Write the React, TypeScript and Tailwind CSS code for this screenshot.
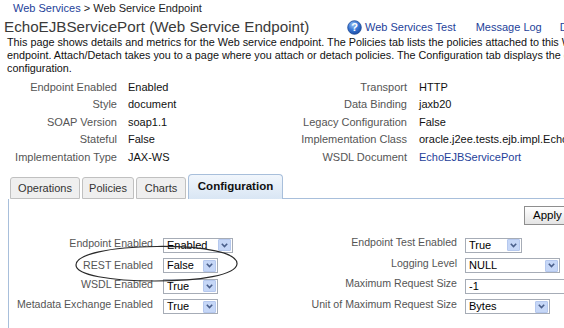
import React from "react";

const HelpIcon = () => (
  <svg width="15" height="15" viewBox="0 0 15 15" className="shrink-0">
    <defs>
      <radialGradient id="hg" cx="40%" cy="30%" r="70%">
        <stop offset="0%" stopColor="#9cc4f4" />
        <stop offset="55%" stopColor="#3b78d6" />
        <stop offset="100%" stopColor="#1c4fa8" />
      </radialGradient>
    </defs>
    <circle cx="7.5" cy="7.5" r="6.8" fill="url(#hg)" stroke="#1a4796" strokeWidth="0.8" />
    <text x="7.5" y="11.3" textAnchor="middle" fontSize="11" fontWeight="bold" fill="#ffffff" fontFamily="Liberation Sans, Arial, sans-serif">
      ?
    </text>
  </svg>
);

const Select = ({ value, width }: { value: string; width: number }) => (
  <div
    className="h-[15px] border border-[#a6acb6] bg-white flex items-center justify-between pl-[3px] pr-px text-[11px] text-black leading-none shrink-0"
    style={{ width }}
  >
    <span>{value}</span>
    <span className="w-[13px] h-[12px] bg-[#c6d7f7] border border-[#b5c8ee] rounded-[1px] flex items-center justify-center">
      <svg width="7" height="5" viewBox="0 0 7 5">
        <path d="M0.8 0.8 L3.5 3.6 L6.2 0.8" fill="none" stroke="#4a5f8a" strokeWidth="1.6" />
      </svg>
    </span>
  </div>
);

const props = [
  ["Endpoint Enabled", "Enabled", "Transport", "HTTP"],
  ["Style", "document", "Data Binding", "jaxb20"],
  ["SOAP Version", "soap1.1", "Legacy Configuration", "False"],
  ["Stateful", "False", "Implementation Class", "oracle.j2ee.tests.ejb.impl.EchoEJBServicePortImpl"],
  ["Implementation Type", "JAX-WS", "WSDL Document", "EchoEJBServicePort"],
];

export default function App() {
  return (
    <div className="relative w-[564px] h-[328px] overflow-hidden bg-white font-['Liberation_Sans',Arial,sans-serif] text-[11px] text-[#222]">
      {/* Breadcrumb */}
      <div className="h-[18px] pt-[2px] pl-[13px] leading-[13px] whitespace-nowrap">
        <span className="text-[#1e3f9a]">Web Services</span>
        <span className="text-[#222]"> &gt; Web Service Endpoint</span>
      </div>

      {/* Title row */}
      <div className="h-[18px] flex items-center whitespace-nowrap">
        <div className="w-[347px] shrink-0 pl-[4px] text-[15.2px] text-[#3a3a3a] leading-[18px]">
          EchoEJBServicePort (Web Service Endpoint)
        </div>
        <HelpIcon />
        <span className="ml-[3px] shrink-0 text-[#1e3f9a]">Web Services Test</span>
        <span className="ml-[20px] shrink-0 text-[#1e3f9a]">Message Log</span>
        <span className="ml-[18px] shrink-0 text-[#1e3f9a]">Diagnostic Logs</span>
      </div>

      {/* Description */}
      <div className="pl-[7px] leading-[13px] whitespace-nowrap text-[10.8px] text-[#111]">
        <div>This page shows details and metrics for the Web service endpoint. The Policies tab lists the policies attached to this Web service</div>
        <div>endpoint. Attach/Detach takes you to a page where you attach or detach policies. The Configuration tab displays the endpoint</div>
        <div>configuration.</div>
      </div>

      {/* Properties */}
      <div className="mt-[3px] flex whitespace-nowrap">
        <div className="w-[290px] shrink-0 grid grid-cols-[117px_1fr] auto-rows-[17.5px] items-center">
          {props.map((p) => (
            <React.Fragment key={p[0]}>
              <div className="text-right text-[#555]">{p[0]}</div>
              <div className="pl-[11px] text-[#111]">{p[1]}</div>
            </React.Fragment>
          ))}
        </div>
        <div className="shrink-0 grid grid-cols-[117px_1fr] auto-rows-[17.5px] items-center">
          {props.map((p) => (
            <React.Fragment key={p[2]}>
              <div className="text-right text-[#555]">{p[2]}</div>
              <div className={"pl-[12px] " + (p[2] === "WSDL Document" ? "text-[#1e3f9a]" : "text-[#111]")}>{p[3]}</div>
            </React.Fragment>
          ))}
        </div>
      </div>

      {/* Tabs */}
      <div className="mt-[8.5px] flex items-end h-[25px] pl-[10px] text-[11px] text-[#333]">
        <div className="w-[70px] h-[22px] bg-[#efefef] border border-[#c0c0c0] rounded-t-[3px] flex items-center justify-center">Operations</div>
        <div className="ml-[2px] w-[52px] h-[22px] bg-[#efefef] border border-[#c0c0c0] rounded-t-[3px] flex items-center justify-center">Policies</div>
        <div className="ml-[2px] w-[50px] h-[22px] bg-[#efefef] border border-[#c0c0c0] rounded-t-[3px] flex items-center justify-center">Charts</div>
        <div className="ml-[2px] w-[95px] h-[25px] bg-gradient-to-b from-[#f1f6fc] to-[#d9e6f4] border border-b-0 border-[#a8bfdb] rounded-t-[4px] flex items-center justify-center font-bold text-[11.5px] text-[#111]">
          Configuration
        </div>
        <div className="flex-1 h-full border-b border-[#a8bfdb]" />
      </div>

      {/* Panel */}
      <div className="ml-[8px] border-l border-[#a8bfdb] h-[140px]">
        <div className="flex justify-end pt-[7px] -mr-[8px]">
          <button className="w-[48px] h-[19px] border border-[#8e8e8e] bg-gradient-to-b from-white to-[#e4e4e4] text-[11.5px] text-black text-left pl-[8px] leading-none">
            Apply
          </button>
        </div>

        <div className="mt-[10px] flex whitespace-nowrap text-[10.6px]">
          <div className="w-[291px] shrink-0 grid grid-cols-[144px_1fr] auto-rows-[20.5px] items-center gap-x-[10px]">
            <div className="text-right text-[#555] pb-[3px]">Endpoint Enabled</div>
            <Select value="Enabled" width={70} />
            <div className="text-right text-[#555]">REST Enabled</div>
            <Select value="False" width={55} />
            <div className="text-right text-[#555] pb-[3px]">WSDL Enabled</div>
            <Select value="True" width={55} />
            <div className="text-right text-[#555] pb-[3px]">Metadata Exchange Enabled</div>
            <Select value="True" width={55} />
          </div>
          <div className="shrink-0 grid grid-cols-[157px_1fr] auto-rows-[20.5px] items-center gap-x-[8px]">
            <div className="text-right text-[#555] pb-[4px]">Endpoint Test Enabled</div>
            <Select value="True" width={57} />
            <div className="text-right text-[#555] pb-[4px]">Logging Level</div>
            <Select value="NULL" width={95} />
            <div className="text-right text-[#555] pb-[4px]">Maximum Request Size</div>
            <div className="h-[15px] w-[120px] border border-[#a6acb6] bg-white pl-[3px] flex items-center text-[11px] text-black leading-none">-1</div>
            <div className="text-right text-[#555] pb-[4px]">Unit of Maximum Request Size</div>
            <Select value="Bytes" width={85} />
          </div>
        </div>
      </div>

      {/* Hand-drawn ellipse annotation */}
      <svg className="absolute left-0 top-0 pointer-events-none" width="564" height="328">
        <path
          d="M157 246.5 C205 246 238 253 237 264 C236 275 200 281 155 281 C110 281 76 275 76 265 C76 254 110 247 157 246.5 Z"
          fill="none"
          stroke="#2a2a2a"
          strokeWidth="1.2"
        />
      </svg>
    </div>
  );
}
